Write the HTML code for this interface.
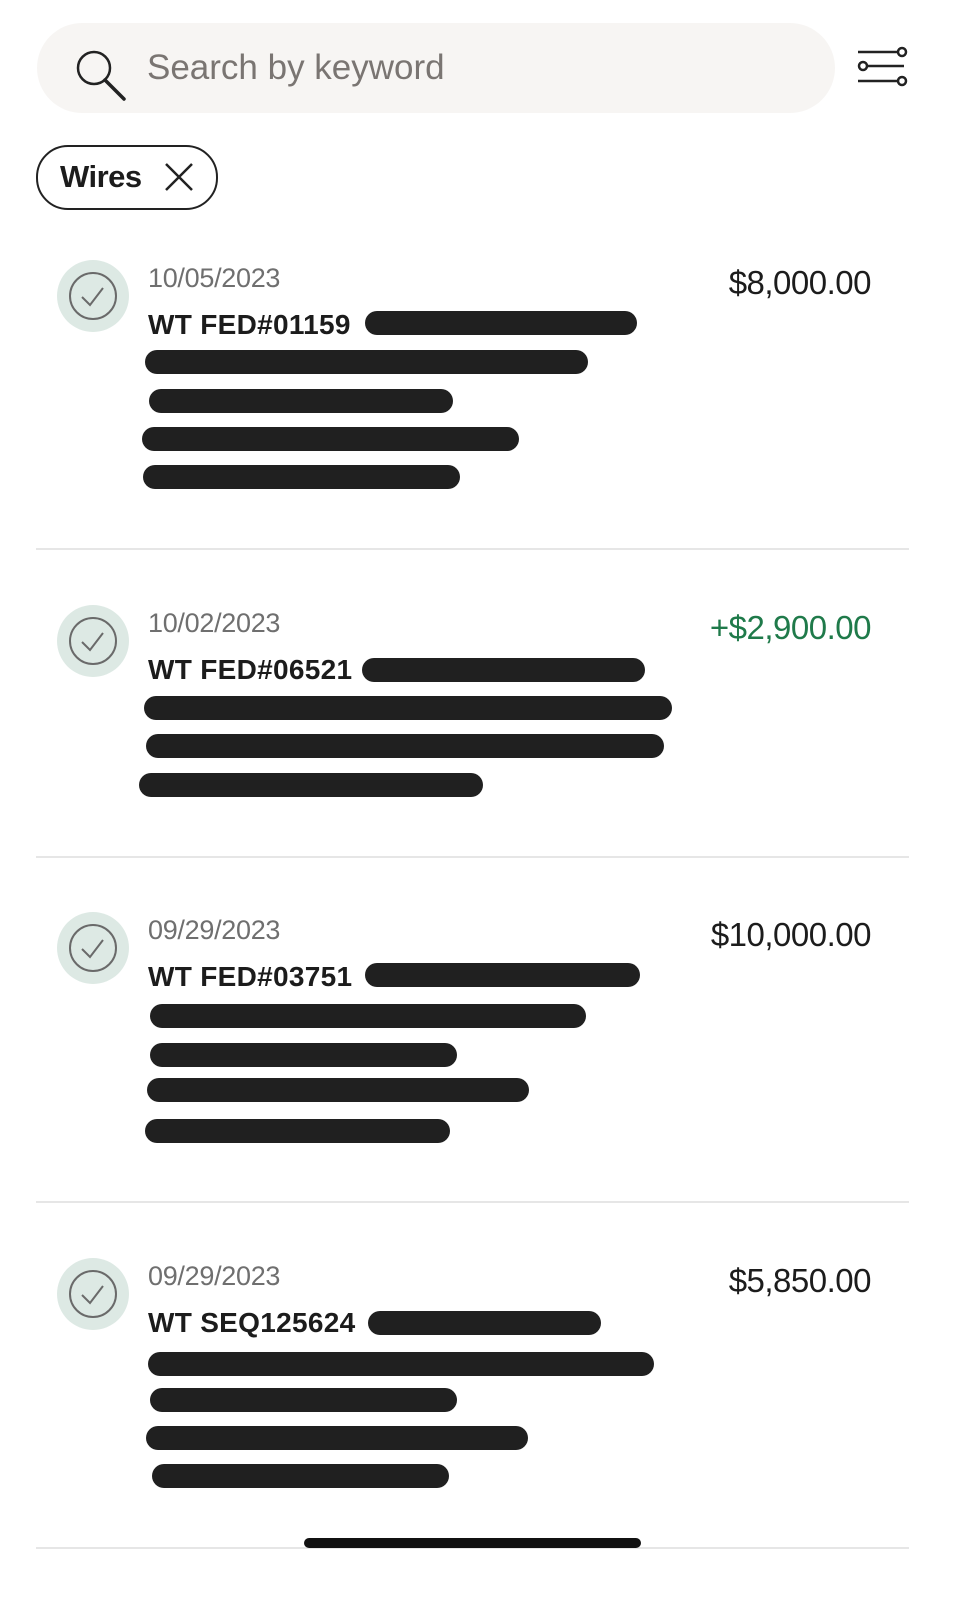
<!DOCTYPE html>
<html><head><style>
body{margin:0;width:964px;height:1600px;background:#fff;position:relative;overflow:hidden;font-family:"Liberation Sans",sans-serif;}
.a{position:absolute}
.bar{position:absolute;height:24px;background:#202020;border-radius:12px}
.circ{position:absolute;width:72px;height:72px;border-radius:50%;background:#dde9e4}
.date{position:absolute;left:148px;font-size:27px;color:#6f6f6f;letter-spacing:-0.3px}
.title{position:absolute;left:148px;font-size:28px;font-weight:bold;color:#1c1c1c;letter-spacing:0.3px}
.amt{position:absolute;right:93px;font-size:33px;color:#1c1c1c;letter-spacing:-0.5px}
.div{position:absolute;left:36px;width:873px;height:2px;background:#e6e6e6}
</style></head><body>
<div class="a" style="left:37px;top:23px;width:798px;height:90px;border-radius:45px;background:#f7f5f3"></div>
<svg class="a" style="left:72px;top:46px" width="58" height="58" viewBox="0 0 58 58"><circle cx="22" cy="22" r="16" fill="none" stroke="#222" stroke-width="2.5"/><line x1="33" y1="34" x2="52" y2="53" stroke="#222" stroke-width="3.5" stroke-linecap="round"/></svg>
<div class="a" style="left:147px;top:48px;font-size:35px;color:#7a7572">Search by keyword</div>
<svg class="a" style="left:856px;top:46px" width="52" height="44" viewBox="0 0 52 44"><g stroke="#222" stroke-width="2.5" fill="none"><line x1="2" y1="6" x2="42" y2="6"/><circle cx="46" cy="6" r="4"/><line x1="12" y1="20" x2="48" y2="20"/><circle cx="7" cy="20" r="4"/><line x1="2" y1="35" x2="42" y2="35"/><circle cx="46" cy="35" r="4"/></g></svg>
<div class="a" style="left:36px;top:145px;width:178px;height:61px;border:2px solid #222;border-radius:32px"></div>
<div class="a" style="left:60px;top:159px;font-size:31px;font-weight:bold;color:#1c1c1c;letter-spacing:-0.5px">Wires</div>
<svg class="a" style="left:164px;top:162px" width="30" height="30" viewBox="0 0 30 30"><path d="M2 2L28 28M28 2L2 28" stroke="#222" stroke-width="2.5"/></svg>

<div class="circ" style="left:57px;top:260px"></div>
<div class="circ" style="left:57px;top:605px"></div>
<div class="circ" style="left:57px;top:912px"></div>
<div class="circ" style="left:57px;top:1258px"></div>
<svg class="a" style="left:57px;top:260px" width="72" height="72"><circle cx="36" cy="36" r="23" fill="none" stroke="#6a6a6a" stroke-width="2"/><path d="M25 37l8 8 13-17" fill="none" stroke="#6a6a6a" stroke-width="2"/></svg>
<svg class="a" style="left:57px;top:605px" width="72" height="72"><circle cx="36" cy="36" r="23" fill="none" stroke="#6a6a6a" stroke-width="2"/><path d="M25 37l8 8 13-17" fill="none" stroke="#6a6a6a" stroke-width="2"/></svg>
<svg class="a" style="left:57px;top:912px" width="72" height="72"><circle cx="36" cy="36" r="23" fill="none" stroke="#6a6a6a" stroke-width="2"/><path d="M25 37l8 8 13-17" fill="none" stroke="#6a6a6a" stroke-width="2"/></svg>
<svg class="a" style="left:57px;top:1258px" width="72" height="72"><circle cx="36" cy="36" r="23" fill="none" stroke="#6a6a6a" stroke-width="2"/><path d="M25 37l8 8 13-17" fill="none" stroke="#6a6a6a" stroke-width="2"/></svg>

<div class="date" style="top:263px">10/05/2023</div>
<div class="title" style="top:309px">WT FED#01159</div>
<div class="amt" style="top:264px">$8,000.00</div>
<div class="date" style="top:608px">10/02/2023</div>
<div class="title" style="top:654px">WT FED#06521</div>
<div class="amt" style="top:609px;color:#1f7a4a">+$2,900.00</div>
<div class="date" style="top:915px">09/29/2023</div>
<div class="title" style="top:961px">WT FED#03751</div>
<div class="amt" style="top:916px">$10,000.00</div>
<div class="date" style="top:1261px">09/29/2023</div>
<div class="title" style="top:1307px">WT SEQ125624</div>
<div class="amt" style="top:1262px">$5,850.00</div>

<div class="bar" style="left:365px;width:272px;top:311px"></div>
<div class="bar" style="left:145px;width:443px;top:350px"></div>
<div class="bar" style="left:149px;width:304px;top:389px"></div>
<div class="bar" style="left:142px;width:377px;top:427px"></div>
<div class="bar" style="left:143px;width:317px;top:465px"></div>

<div class="bar" style="left:362px;width:283px;top:658px"></div>
<div class="bar" style="left:144px;width:528px;top:696px"></div>
<div class="bar" style="left:146px;width:518px;top:734px"></div>
<div class="bar" style="left:139px;width:344px;top:773px"></div>

<div class="bar" style="left:365px;width:275px;top:963px"></div>
<div class="bar" style="left:150px;width:436px;top:1004px"></div>
<div class="bar" style="left:150px;width:307px;top:1043px"></div>
<div class="bar" style="left:147px;width:382px;top:1078px"></div>
<div class="bar" style="left:145px;width:305px;top:1119px"></div>

<div class="bar" style="left:368px;width:233px;top:1311px"></div>
<div class="bar" style="left:148px;width:506px;top:1352px"></div>
<div class="bar" style="left:150px;width:307px;top:1388px"></div>
<div class="bar" style="left:146px;width:382px;top:1426px"></div>
<div class="bar" style="left:152px;width:297px;top:1464px"></div>

<div class="div" style="top:548px"></div>
<div class="div" style="top:856px"></div>
<div class="div" style="top:1201px"></div>
<div class="div" style="top:1547px"></div>
<div class="a" style="left:304px;top:1538px;width:337px;height:10px;border-radius:5px;background:#111"></div>
</body></html>
